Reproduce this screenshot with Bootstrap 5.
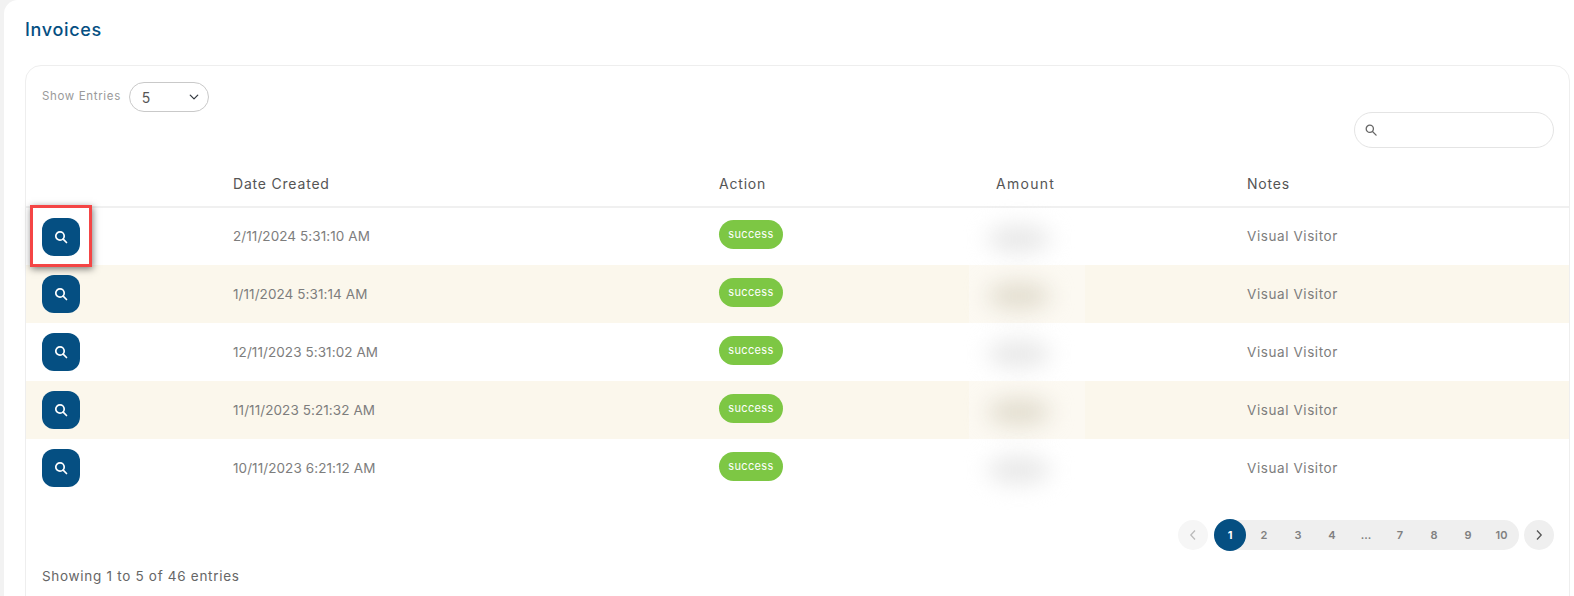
<!DOCTYPE html>
<html lang="en">
<head>
<meta charset="utf-8">
<title>Invoices</title>
<link href="https://cdn.jsdelivr.net/npm/bootstrap@5.3.0/dist/css/bootstrap.min.css" rel="stylesheet">
<style>
html,body{height:596px;overflow:hidden}
body{background:#f2f2f2;font-family:Inter,"Liberation Sans",sans-serif;color:#7a7a7a;padding:0 0 0 4px}
.sheet{background:#fff;height:700px;border-radius:14px 0 0 0;padding:17px 4px 0 21px}
.sheet-title{font-size:18px;font-weight:500;color:#054f82;margin:0 0 22px;line-height:26px;letter-spacing:.68px}
.inv-card{border:1px solid #eeeeee;border-radius:16px 16px 0 0;background:#fff;height:600px}
.inv-top{padding:16px 15px 0 16px;height:109px;position:relative}
.entries-label{font-size:11.5px;color:#9a9a9a;letter-spacing:.65px}
.entries-select{width:80px;height:30px;border:1px solid #c9c9c9;border-radius:15px;padding:0 12px;font-size:14px;color:#555;background-position:right 9px center;background-size:10px 10px;font-family:inherit}
.search-wrap{width:200px;height:36px;position:relative;margin:0 0 0 auto}
.search-box{width:100%;height:36px;border:1px solid #e4e4e4;border-radius:18px;padding:0 12px 0 30px}
.search-ico{position:absolute;left:11px;top:12px}
.inv-table{width:100%;table-layout:fixed;margin:0;border-collapse:collapse}
.inv-table th{font-weight:400;font-size:14px;color:#555;height:0;padding:0 16px 14px;line-height:17px;border-bottom:2px solid #f0f0f0;letter-spacing:.8px}
.inv-table th.amount-head{letter-spacing:1.3px}
.inv-table td{height:58px;padding:0 16px;font-size:13.5px;color:#7d7d7d;vertical-align:middle;position:relative;border:0;letter-spacing:.08px}
.inv-table td.note-cell{letter-spacing:.58px}
.inv-table tr.alt td{background:#fbf7ec}
.view-btn{width:38px;height:38px;border-radius:12px;background:#054f82;border:0;padding:0;display:flex;align-items:center;justify-content:center}
.red-mark{position:absolute;z-index:3;left:4px;top:-3px;width:62px;height:62px;border:3px solid #f44545;box-shadow:1px 2px 7px rgba(0,0,0,.5);pointer-events:none}
.pill-ok{display:inline-block;width:64px;height:29px;line-height:28px;text-align:center;border-radius:15px;background:#7dc744;color:#fff;font-size:11px;position:relative;top:-2px;letter-spacing:.35px}
.veil{position:absolute;left:-11px;width:116px;top:0;bottom:0;background:rgba(255,255,255,.3);pointer-events:none}
.smudge{position:absolute;left:18px;width:64px;top:17px;height:28px;border-radius:50%;background:#e8e8e8;filter:blur(11px)}
tr.alt .smudge{background:#e2ddcf}
.inv-foot{padding:21px 15px 0 16px}
.pager-wrap{display:flex;justify-content:flex-end;align-items:center;height:34px}
.pager-round{width:30px;height:30px;border-radius:50%;background:#efefef;display:flex;align-items:center;justify-content:center}
.pager-round.off{background:#f6f6f6}
.pager-track{display:flex;align-items:center;height:30px;background:#efefef;border-radius:15px;margin:0 5px 0 6px;width:305px}
.pager-num{width:34px;text-align:center;font-size:11px;font-weight:600;color:#808080;text-decoration:none}
.pager-num.on{width:32px;height:32px;line-height:32px;border-radius:50%;background:#054f82;color:#fff;font-weight:700;margin-right:1px}
.pager-num.tight{width:33px}
.show-info{font-size:13.5px;color:#666;margin-top:14px;line-height:20px;letter-spacing:.7px}
</style>
</head>
<body>
<div class="sheet">
  <h1 class="sheet-title">Invoices</h1>
  <div class="inv-card">
    <div class="inv-top">
      <div class="d-flex align-items-center gap-2">
        <span class="entries-label">Show Entries</span>
        <select class="form-select entries-select" aria-label="Show entries"><option>5</option></select>
      </div>
      <div class="search-wrap">
        <svg class="search-ico" width="12" height="12" viewBox="0 0 12 12" fill="none" stroke="#666" stroke-width="1.3"><circle cx="4.8" cy="4.8" r="3.6"/><path d="M7.5 7.5l3.6 3.6" stroke-linecap="round"/></svg>
        <input class="form-control search-box" type="text" aria-label="Search">
      </div>
    </div>
    <table class="inv-table">
      <colgroup><col style="width:191px"><col style="width:486px"><col style="width:277px"><col style="width:251px"><col></colgroup>
      <thead>
        <tr><th></th><th>Date Created</th><th>Action</th><th class="amount-head">Amount</th><th>Notes</th></tr>
      </thead>
      <tbody>
        <tr>
          <td><button class="view-btn" aria-label="View"><svg width="14" height="14" viewBox="0 0 14 14" fill="none" stroke="#fff" stroke-width="1.7"><circle cx="6" cy="6" r="4.2"/><path d="M9.2 9.2l3.3 3.3" stroke-linecap="round"/></svg></button><span class="red-mark"></span></td>
          <td>2/11/2024 5:31:10 AM</td>
          <td><span class="pill-ok">success</span></td>
          <td><span class="veil"><span class="smudge"></span></span></td>
          <td class="note-cell">Visual Visitor</td>
        </tr>
        <tr class="alt">
          <td><button class="view-btn" aria-label="View"><svg width="14" height="14" viewBox="0 0 14 14" fill="none" stroke="#fff" stroke-width="1.7"><circle cx="6" cy="6" r="4.2"/><path d="M9.2 9.2l3.3 3.3" stroke-linecap="round"/></svg></button></td>
          <td>1/11/2024 5:31:14 AM</td>
          <td><span class="pill-ok">success</span></td>
          <td><span class="veil"><span class="smudge"></span></span></td>
          <td class="note-cell">Visual Visitor</td>
        </tr>
        <tr>
          <td><button class="view-btn" aria-label="View"><svg width="14" height="14" viewBox="0 0 14 14" fill="none" stroke="#fff" stroke-width="1.7"><circle cx="6" cy="6" r="4.2"/><path d="M9.2 9.2l3.3 3.3" stroke-linecap="round"/></svg></button></td>
          <td>12/11/2023 5:31:02 AM</td>
          <td><span class="pill-ok">success</span></td>
          <td><span class="veil"><span class="smudge"></span></span></td>
          <td class="note-cell">Visual Visitor</td>
        </tr>
        <tr class="alt">
          <td><button class="view-btn" aria-label="View"><svg width="14" height="14" viewBox="0 0 14 14" fill="none" stroke="#fff" stroke-width="1.7"><circle cx="6" cy="6" r="4.2"/><path d="M9.2 9.2l3.3 3.3" stroke-linecap="round"/></svg></button></td>
          <td>11/11/2023 5:21:32 AM</td>
          <td><span class="pill-ok">success</span></td>
          <td><span class="veil"><span class="smudge"></span></span></td>
          <td class="note-cell">Visual Visitor</td>
        </tr>
        <tr>
          <td><button class="view-btn" aria-label="View"><svg width="14" height="14" viewBox="0 0 14 14" fill="none" stroke="#fff" stroke-width="1.7"><circle cx="6" cy="6" r="4.2"/><path d="M9.2 9.2l3.3 3.3" stroke-linecap="round"/></svg></button></td>
          <td>10/11/2023 6:21:12 AM</td>
          <td><span class="pill-ok">success</span></td>
          <td><span class="veil"><span class="smudge"></span></span></td>
          <td class="note-cell">Visual Visitor</td>
        </tr>
      </tbody>
    </table>
    <div class="inv-foot">
      <div class="pager-wrap">
        <span class="pager-round off"><svg width="10" height="12" viewBox="0 0 10 12" fill="none" stroke="#bbb" stroke-width="1.3"><path d="M7 1.5L2.8 6 7 10.5"/></svg></span>
        <div class="pager-track">
          <a class="pager-num on" href="#">1</a>
          <a class="pager-num" href="#">2</a>
          <a class="pager-num" href="#">3</a>
          <a class="pager-num" href="#">4</a>
          <a class="pager-num" href="#">...</a>
          <a class="pager-num" href="#">7</a>
          <a class="pager-num" href="#">8</a>
          <a class="pager-num" href="#">9</a>
          <a class="pager-num tight" href="#">10</a>
        </div>
        <span class="pager-round"><svg width="10" height="12" viewBox="0 0 10 12" fill="none" stroke="#555" stroke-width="1.3"><path d="M3 1.5L7.2 6 3 10.5"/></svg></span>
      </div>
      <div class="show-info">Showing 1 to 5 of 46 entries</div>
    </div>
  </div>
</div>
<script src="https://cdn.jsdelivr.net/npm/bootstrap@5.3.0/dist/js/bootstrap.bundle.min.js"></script>
</body>
</html>
